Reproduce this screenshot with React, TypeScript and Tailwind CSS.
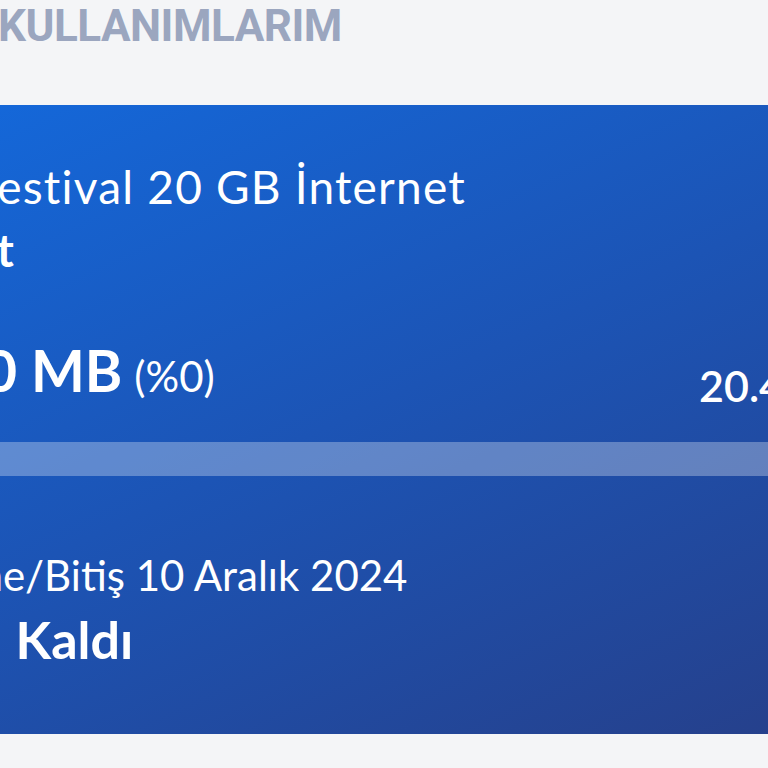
export default function App() {
    return (
        <div className="w-[768px] h-[768px] overflow-hidden bg-[#f4f5f7]">
            <h1 className="h-[105px] pt-[4px] -ml-[2px] font-['Roboto',sans-serif] text-[44px] leading-none font-bold tracking-[-0.5px] text-[#9ba6bf] whitespace-nowrap">
                KULLANIMLARIM
            </h1>
            <section className="-ml-[40px] w-[1000px] pl-[40px] pr-[47px] pt-[59px] pb-[69px] bg-[linear-gradient(155deg,#1468da_0%,#1c54b5_45%,#273d85_100%)] text-white font-['Lato',sans-serif] whitespace-nowrap">
                <p className="-ml-[28px] text-[46px] leading-none font-normal tracking-[1.2px]">Festival 20 GB İnternet</p>
                <p className="-ml-[102px] mt-[17px] text-[46px] leading-none font-bold">Paket</p>
                <div className="flex justify-between items-start mt-[69px]">
                    <p className="-ml-[16px] leading-none">
                        <span className="text-[57px] font-bold">0 MB</span>
                        <span className="text-[42px] font-normal ml-3">(%0)</span>
                    </p>
                    <p className="mt-[22px] text-[43px] leading-none font-semibold">20.480 MB</p>
                </div>
                <div className="mt-[35px] h-[34px] -mx-[10px] bg-white/30">
                    <div className="h-full w-0 bg-white" />
                </div>
                <p className="-ml-[141px] mt-[78px] text-[42px] leading-none font-normal">Yenileme/Bitiş 10 Aralık 2024</p>
                <p className="-ml-[166px] mt-[17px] text-[52px] leading-none font-bold">20 Gün Kaldı</p>
            </section>
        </div>
    );
}
